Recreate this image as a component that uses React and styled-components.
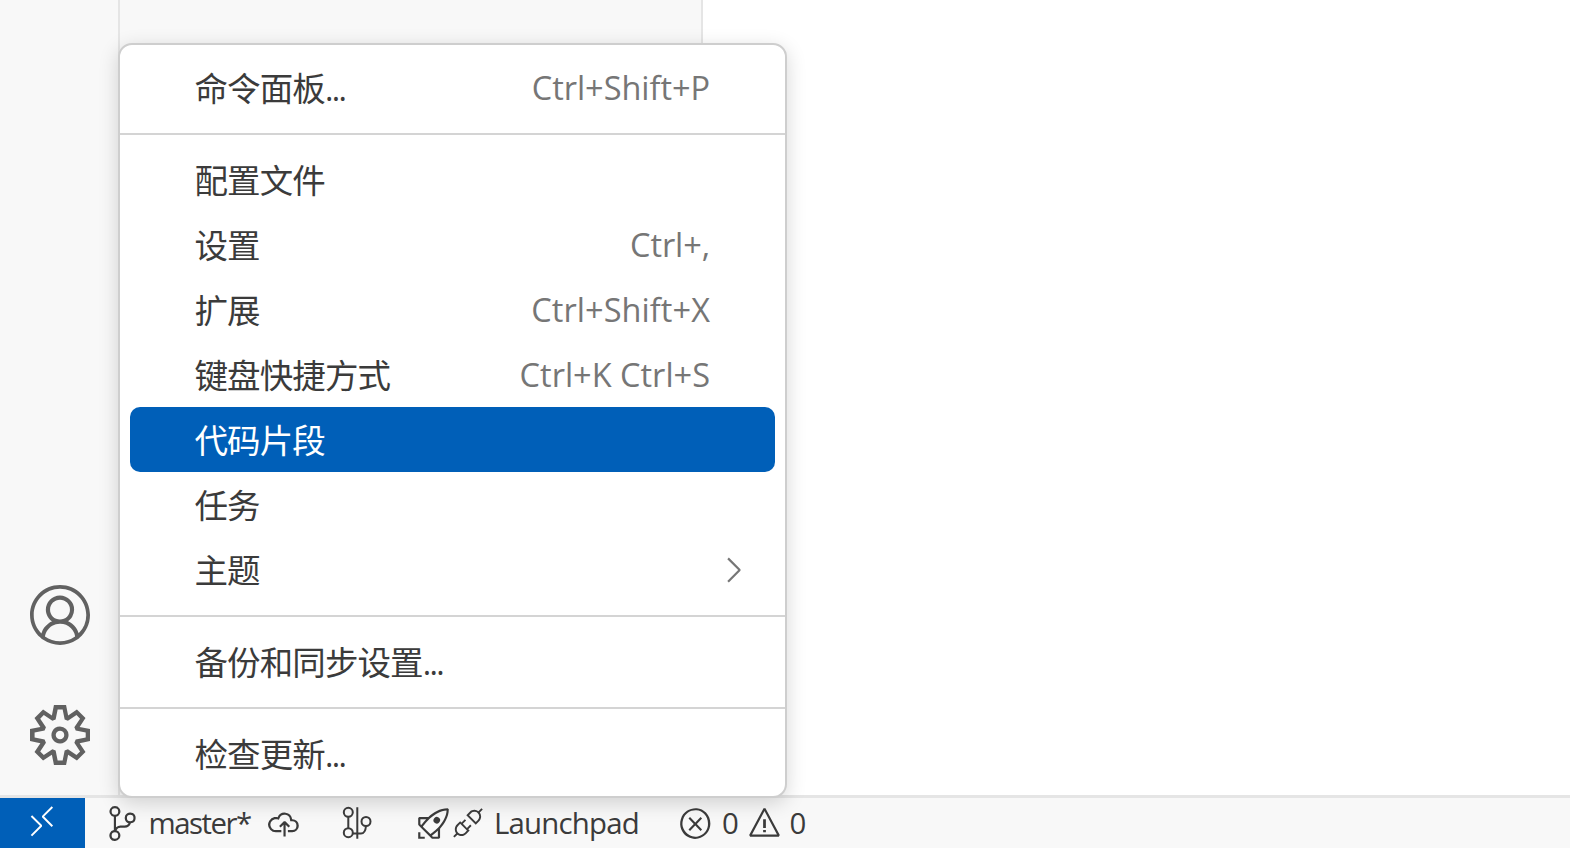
import React from "react";
import styled, { createGlobalStyle } from "styled-components";
import {
  VscAccount,
  VscSettingsGear,
  VscSourceControl,
  VscCloudUpload,
  VscRocket,
  VscDebugDisconnect,
  VscError,
  VscWarning,
  VscRemote,
  VscChevronRight,
} from "react-icons/vsc";

const Global = createGlobalStyle`
  *, *::before, *::after { box-sizing: border-box; }
  body {
    margin: 0;
    background: #ffffff;
    color: #3b3b3b;
    font-family: "Open Sans", "Noto Sans", "Noto Sans CJK SC", sans-serif;
    overflow: hidden;
  }
`;

const Window = styled.div`
  position: relative;
  display: flex;
  flex-direction: column;
  width: 1570px;
  height: 848px;
  background: #fff;
`;

const Workbench = styled.div`
  flex: 1;
  display: flex;
  min-height: 0;
`;

const ActivityBar = styled.nav`
  width: 120px;
  display: flex;
  flex-direction: column;
  justify-content: flex-end;
  align-items: center;
  background: #f8f8f8;
  border-right: 2px solid #e5e5e5;
`;

const ActivityItem = styled.button`
  display: flex;
  align-items: center;
  justify-content: center;
  width: 120px;
  height: 120px;
  padding: 0;
  margin-right: -2px;
  border: 0;
  background: none;
  color: #616161;
  font-size: 60px;
`;

const SideBar = styled.aside`
  width: 583px;
  background: #f8f8f8;
  border-right: 2px solid #e5e5e5;
`;

const StatusBar = styled.footer`
  display: flex;
  height: 53px;
  background: #f8f8f8;
  border-top: 3px solid #e5e5e5;
  font-size: 29.4px;
  line-height: 50px;
`;

const RemoteButton = styled.div`
  display: flex;
  align-items: center;
  justify-content: center;
  width: 85px;
  padding: 0 1px 2px 0;
  background: #005fb8;
  color: #fff;
  font-size: 36px;
`;

const StatusItem = styled.div`
  display: flex;
  align-items: center;
  margin-left: ${(p) => p.$before || 0}px;
`;

const StatusIcon = styled.span`
  display: flex;
  margin-right: ${(p) => p.$after || 0}px;
  font-size: 35px;
`;

const StatusText = styled.span`
  width: ${(p) => p.$width}px;
  white-space: nowrap;
  letter-spacing: ${(p) => p.$track || 0}px;
`;

const Menu = styled.ul`
  position: absolute;
  left: 118px;
  top: 43px;
  width: 669px;
  margin: 0;
  padding: 10px 0;
  list-style: none;
  background: #fff;
  border: 2px solid #cecece;
  border-radius: 14px;
  box-shadow: 0 5px 20px rgba(0, 0, 0, 0.16);
`;

const MenuItem = styled.li`
  display: flex;
  align-items: center;
  height: 65px;
  margin: 0 10px;
  padding: 0 65px;
  border-radius: 10px;
  font-size: 32.5px;
  background: ${(p) => (p.$active ? "#005fb8" : "transparent")};
  color: ${(p) => (p.$active ? "#fff" : "#3b3b3b")};
`;

const Label = styled.span`
  flex: 1;
  margin: -3px 0 0 -0.5px;
  font-family: "Noto Sans CJK SC", sans-serif;
  font-size: 33.5px;
  letter-spacing: -0.9px;
`;

const Dots = styled.span`
  font-family: "Open Sans", sans-serif;
  font-size: 32px;
  letter-spacing: -1.6px;
`;

const Shortcut = styled.span`
  color: #767676;
  letter-spacing: ${(p) => p.$track || 0}px;
`;

const Submenu = styled.span`
  display: flex;
  margin-right: -43px;
  color: #767676;
  font-size: 40px;
`;

const Separator = styled.li`
  height: 2px;
  margin: 12.5px 0;
  background: #d4d4d4;
`;

const groups = [
  [{ label: "命令面板", more: true, keys: "Ctrl+Shift+P", track: -0.04 }],
  [
    { label: "配置文件" },
    { label: "设置", keys: "Ctrl+,", track: -0.1 },
    { label: "扩展", keys: "Ctrl+Shift+X", track: 0.07 },
    { label: "键盘快捷方式", keys: "Ctrl+K Ctrl+S" },
    { label: "代码片段", active: true },
    { label: "任务" },
    { label: "主题", submenu: true },
  ],
  [{ label: "备份和同步设置", more: true }],
  [{ label: "检查更新", more: true }],
];

function GraphIcon() {
  return (
    <svg width="30" height="34" viewBox="0 0 30 34" fill="none" stroke="currentColor" strokeWidth="2">
      <circle cx="6.300" cy="6.300" r="4.500" />
      <circle cx="6.300" cy="26.700" r="4.500" />
      <circle cx="24" cy="15.500" r="4.500" />
      <path d="M6.300 10.800V22.200M15.300 1.200V32.800M10.800 27.500H19Q23.300 27.500 24 20" />
    </svg>
  );
}

export default function App() {
  return (
    <Window>
      <Global />
      <Workbench>
        <ActivityBar>
          <ActivityItem><VscAccount /></ActivityItem>
          <ActivityItem><VscSettingsGear /></ActivityItem>
        </ActivityBar>
        <SideBar />
      </Workbench>
      <StatusBar>
        <RemoteButton><VscRemote /></RemoteButton>
        <StatusItem $before={19.5}>
          <StatusIcon $after={9}><VscSourceControl /></StatusIcon>
          <StatusText $width={117.5} $track={-1.5}>master*</StatusText>
          <StatusIcon><VscCloudUpload /></StatusIcon>
        </StatusItem>
        <StatusItem $before={41}>
          <GraphIcon />
        </StatusItem>
        <StatusItem $before={43.7}>
          <StatusIcon><VscRocket /></StatusIcon>
          <StatusIcon $after={8.3}><VscDebugDisconnect /></StatusIcon>
          <StatusText $width={145} $track={-0.8}>Launchpad</StatusText>
        </StatusItem>
        <StatusItem $before={39.5}>
          <StatusIcon $after={8.5}><VscError /></StatusIcon>
          <StatusText $width={24.8}>0</StatusText>
          <StatusIcon $after={7.7}><VscWarning /></StatusIcon>
          <StatusText $width={17}>0</StatusText>
        </StatusItem>
      </StatusBar>
      <Menu>
        {groups.map((items, g) => (
          <React.Fragment key={g}>
            {g > 0 && <Separator />}
            {items.map((item) => (
              <MenuItem key={item.label} $active={item.active}>
                <Label>
                  {item.label}
                  {item.more && <Dots>...</Dots>}
                </Label>
                {item.keys && <Shortcut $track={item.track}>{item.keys}</Shortcut>}
                {item.submenu && <Submenu><VscChevronRight /></Submenu>}
              </MenuItem>
            ))}
          </React.Fragment>
        ))}
      </Menu>
    </Window>
  );
}
